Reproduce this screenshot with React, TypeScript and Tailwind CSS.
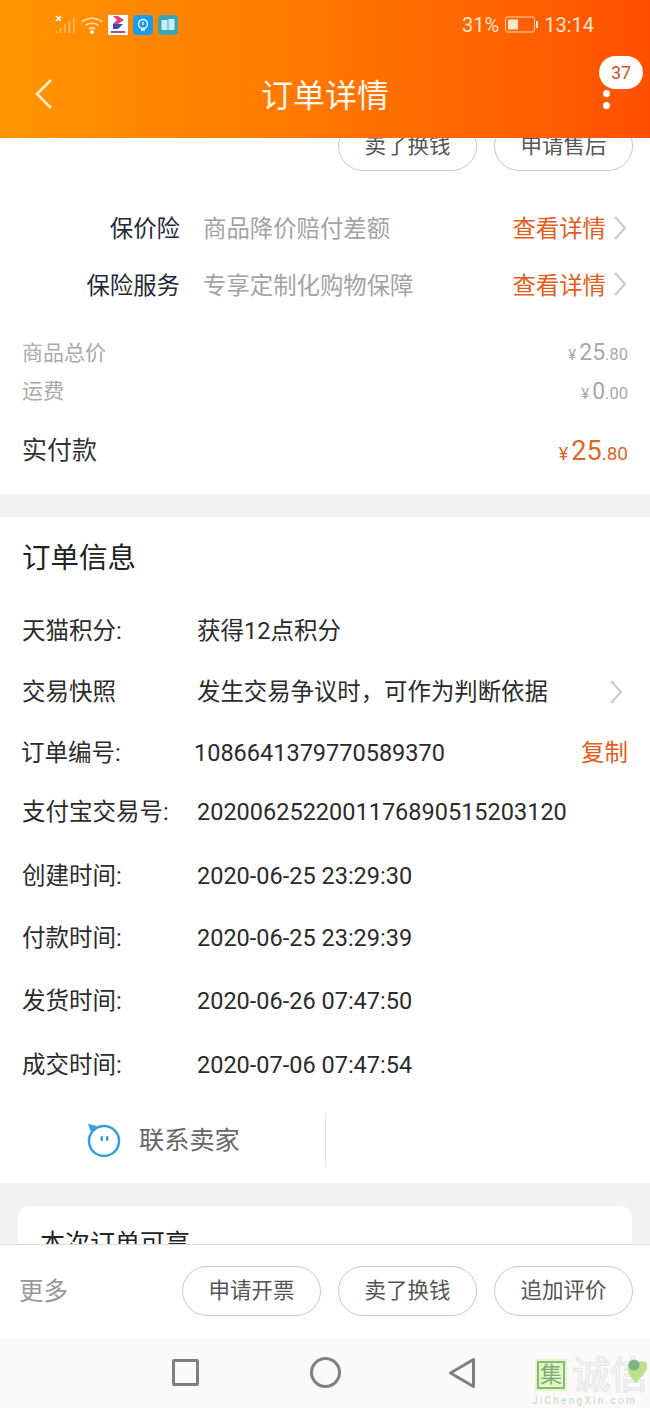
const Chevron = () => (
  <svg width="14" height="26" viewBox="0 0 14 26" fill="none" className="shrink-0">
    <path d="M2 2l10 11L2 24" stroke="#c9c9c9" strokeWidth="2" />
  </svg>
);

const PillButton = ({ label }: { label: string }) => (
  <div className="w-[139px] h-[50px] pt-[1px] rounded-full border border-[#c8c8c8] bg-white flex items-center justify-center text-[21.500px] text-[#555]">
    {label}
  </div>
);

const Money = ({ big, small }: { big: string; small: string }) => (
  <span className="flex items-baseline text-[#a8a8a8]">
    <span className="text-[15px] mr-[3px]">¥</span>
    <span className="text-[23px]">{big}</span>
    <span className="text-[16.500px]">.{small}</span>
  </span>
);

const StatusIcons = () => (
  <div className="flex items-center">
    <svg width="20" height="20" viewBox="0 0 20 20" className="mr-[6px]">
      <path d="M1 1l5 5M6 1L1 6" stroke="#fff" strokeWidth="1.600" />
      <path d="M1.500 18v-2M5.500 18v-5M10 18V9M14.500 18V6M19 18V2" stroke="#ffb866" strokeWidth="1.600" />
    </svg>
    <svg width="22" height="18" viewBox="0 0 22 18" fill="none" className="mr-[5px]">
      <path d="M1 6c5.500-5 14.500-5 20 0M4.500 9.500c3.500-3 9.500-3 13 0M8 13c1.700-1.200 4.300-1.200 6 0" stroke="#ffdca8" strokeWidth="1.700" />
      <circle cx="11" cy="16" r="2" fill="#fff3dc" />
    </svg>
    <svg width="20" height="20" viewBox="0 0 20 20" className="mr-[5px]">
      <rect width="20" height="20" fill="#fff" />
      <path d="M5 1h5l6 4-6 4H5l4-4z" fill="#e8407c" />
      <path d="M5 9h5l5 0-5 5H5z" fill="#3a4cc0" />
      <rect x="3" y="16" width="14" height="2" fill="#b04aa0" />
    </svg>
    <svg width="20" height="20" viewBox="0 0 20 20" className="mr-[5px]">
      <rect width="20" height="20" rx="4" fill="#1a9cf0" />
      <circle cx="10" cy="9" r="4.500" fill="none" stroke="#fff" strokeWidth="1.300" />
      <path d="M8 15h4M10 7v3" stroke="#fff" strokeWidth="1.300" />
    </svg>
    <svg width="20" height="20" viewBox="0 0 20 20">
      <rect width="20" height="20" rx="4" fill="#3aa7b8" />
      <path d="M3.500 5h6v10h-6zM10.500 4h6v11h-6z" fill="#c8eef4" />
    </svg>
  </div>
);

const BatteryIcon = () => (
  <svg width="33" height="18" viewBox="0 0 33 18" fill="none">
    <rect x="0.500" y="1" width="29" height="15" rx="2" stroke="#ffd9b0" />
    <rect x="3" y="3.500" width="10" height="10" fill="#ffe6cc" />
    <rect x="31" y="5" width="2" height="7" fill="#ffe6cc" />
  </svg>
);

const SellerIcon = () => (
  <svg width="34" height="34" viewBox="0 0 34 34" fill="none">
    <circle cx="17" cy="18" r="15" stroke="#2fa3dc" strokeWidth="2.500" />
    <path d="M1 1l9 2-6 6z" fill="#2fa3dc" />
    <rect x="13.500" y="13" width="2.500" height="5" rx="1.200" fill="#2fa3dc" />
    <rect x="19" y="13" width="2.500" height="5" rx="1.200" fill="#2fa3dc" />
  </svg>
);

const App = () => {
  return (
    <div className="w-[650px] h-[1408px] overflow-hidden flex flex-col bg-[#f2f2f2] font-['Roboto','Noto_Sans_CJK_SC',sans-serif]">
      {/* header */}
      <header className="h-[138px] shrink-0 relative z-10 bg-gradient-to-r from-[#ff9500] to-[#ff5000] text-white">
        <div className="h-[50px] flex items-center pl-[55px] pr-[56px]">
          <StatusIcons />
          <div className="ml-auto flex items-center gap-[6px] text-[20px] text-[#ffe6cc]">
            <span>31%</span>
            <BatteryIcon />
            <span>13:14</span>
          </div>
        </div>
        <div className="h-[88px] pt-[4px] relative flex items-center justify-center">
          <h1 className="text-[32px] leading-none font-normal text-[#fff8ee]">订单详情</h1>
          <svg width="18" height="30" viewBox="0 0 18 30" fill="none" className="absolute left-[35px] top-[29px]">
            <path d="M16 1L2 15l14 14" stroke="#ffedd0" strokeWidth="2.500" />
          </svg>
          <div className="absolute left-[599px] top-[6px] w-[44px] h-[33px] rounded-full bg-white flex items-center justify-center text-[18px] text-[#c8562a]">
            37
          </div>
          <div className="absolute left-[603px] top-[40px] flex flex-col gap-[5px]">
            <span className="w-[7px] h-[7px] rounded-full bg-white" />
            <span className="w-[7px] h-[7px] rounded-full bg-white" />
          </div>
        </div>
      </header>

      {/* scrolled content */}
      <main className="flex-1 min-h-0 overflow-hidden">
        <section className="bg-white -mt-[17px] pb-[19px]">
          <div className="flex justify-end gap-[17px] pr-[17px]">
            <PillButton label="卖了换钱" />
            <PillButton label="申请售后" />
          </div>

          <div className="mt-[29px] text-[23.400px]">
            <div className="h-[57px] pt-[2px] flex items-center">
              <span className="w-[180px] text-right text-[#1d2b38]">保价险</span>
              <span className="ml-[23px] text-[#a3a3a3]">商品降价赔付差额</span>
              <span className="ml-auto text-[#e25d1c]">查看详情</span>
              <span className="ml-[7px] mr-[23px] -mt-[3px]"><Chevron /></span>
            </div>
            <div className="h-[57px] pt-[2px] flex items-center">
              <span className="w-[180px] text-right text-[#1d2b38]">保险服务</span>
              <span className="ml-[23px] text-[#a3a3a3]">专享定制化购物保障</span>
              <span className="ml-auto text-[#e25d1c]">查看详情</span>
              <span className="ml-[7px] mr-[23px] -mt-[5px]"><Chevron /></span>
            </div>
          </div>

          <div className="mt-[19px] px-[22px]">
            <div className="h-[39px] pt-[2px] flex items-center justify-between text-[21px] text-[#aaa]">
              <span>商品总价</span>
              <Money big="25" small="80" />
            </div>
            <div className="h-[39px] pt-[1px] flex items-center justify-between text-[21px] text-[#aaa]">
              <span>运费</span>
              <Money big="0" small="00" />
            </div>
            <div className="mt-[14px] h-[50px] pt-[2px] flex items-center justify-between">
              <span className="text-[25px] text-[#333]">实付款</span>
              <span className="flex items-baseline text-[#e0662a]">
                <span className="text-[18px] mr-[3px]">¥</span>
                <span className="text-[27px]">25</span>
                <span className="text-[19px]">.80</span>
              </span>
            </div>
          </div>
        </section>

        <section className="mt-[23px] bg-white pt-[20px] pb-[17px] text-[23.500px] text-[#2b2b2b]">
          <h2 className="h-[40px] pt-[4px] px-[22px] mb-[22px] flex items-center text-[28.500px] font-normal text-[#222]">订单信息</h2>

          <div className="h-[62px] pt-[3px] flex items-center pl-[22px]">
            <span className="w-[175px]">天猫积分:</span>
            <span>获得12点积分</span>
          </div>
          <div className="h-[61px] pt-[3px] flex items-center pl-[22px]">
            <span className="w-[175px]">交易快照</span>
            <span className="text-[23.400px]">发生交易争议时，可作为判断依据</span>
            <span className="ml-auto mr-[27px] -mt-[3px]"><Chevron /></span>
          </div>
          <div className="h-[60px] pt-[3px] flex items-center pl-[21px]">
            <span className="w-[173px]">订单编号:</span>
            <span>1086641379770589370</span>
            <span className="ml-auto mr-[22px] text-[#e25d1c]">复制</span>
          </div>
          <div className="h-[61px] flex items-center pl-[22px]">
            <span className="w-[175px]">支付宝交易号:</span>
            <span>2020062522001176890515203120</span>
          </div>
          <div className="h-[64px] pt-[3px] flex items-center pl-[22px]">
            <span className="w-[175px]">创建时间:</span>
            <span>2020-06-25 23:29:30</span>
          </div>
          <div className="h-[63px] pt-[1px] flex items-center pl-[22px]">
            <span className="w-[175px]">付款时间:</span>
            <span>2020-06-25 23:29:39</span>
          </div>
          <div className="h-[63px] pt-[1px] flex items-center pl-[22px]">
            <span className="w-[175px]">发货时间:</span>
            <span>2020-06-26 07:47:50</span>
          </div>
          <div className="h-[63px] pt-[2px] flex items-center pl-[22px]">
            <span className="w-[175px]">成交时间:</span>
            <span>2020-07-06 07:47:54</span>
          </div>

          <div className="mt-[17px] h-[53px] flex">
            <div className="w-[326px] border-r border-[#e6e6e6] flex items-center pl-[87px] gap-[18px]">
              <SellerIcon />
              <span className="text-[25.200px] pt-[2px] text-[#666]">联系卖家</span>
            </div>
          </div>
        </section>

        <section className="pt-[23px] px-[18px]">
          <div className="h-[80px] bg-white rounded-t-[12px] px-[22px] pt-[19px] text-[25px] leading-[38px] text-[#222]">
            本次订单可享
          </div>
        </section>
      </main>

      {/* bottom actions */}
      <div className="h-[94px] shrink-0 bg-white border-t border-[#dcdcdc] flex items-center pl-[19px] pr-[17px] pb-[1px]">
        <span className="text-[24.500px] pt-[3px] text-[#999]">更多</span>
        <div className="ml-auto flex gap-[17px]">
          <PillButton label="申请开票" />
          <PillButton label="卖了换钱" />
          <PillButton label="追加评价" />
        </div>
      </div>

      {/* android nav bar */}
      <nav className="h-[70px] shrink-0 relative bg-[#fafafa] flex items-center">
        <div className="flex items-center pl-[172px] gap-[111px] pb-[1px]">
          <span className="w-[27px] h-[27px] rounded-[2px] border-[3px] border-[#808080]" />
          <span className="w-[31px] h-[31px] rounded-full border-[3px] border-[#808080]" />
          <svg width="28" height="32" viewBox="0 0 28 32" fill="none" className="-ml-[4px]">
            <path d="M25.500 2.500v27L2.500 16z" stroke="#808080" strokeWidth="3" strokeLinejoin="round" />
          </svg>
        </div>
        <div className="absolute left-[532px] top-[19px] w-[118px]">
          <div className="flex items-center pl-[3px]">
            <span className="w-[32px] h-[32px] bg-[#e4f5c0] flex items-center justify-center">
              <span className="w-[28px] h-[28px] border-2 border-[#86b884] flex items-center justify-center text-[22px] leading-none text-[#7aad78]">集</span>
            </span>
            <span className="ml-[5px] text-[38px] leading-[36px] text-transparent [-webkit-text-stroke:1px_#e4e4e4] whitespace-nowrap">诚信</span>
          </div>
          <div className="mt-[2px] text-[10px] leading-[12px] tracking-[2.300px] text-[#c4dcbc] whitespace-nowrap">JiChengXin.com</div>
          <svg width="22" height="26" viewBox="0 0 22 26" className="absolute left-[95px] top-[1px]">
            <path d="M9 25C2 18 0 12 1 7c1-4 6-5 8-1 2-3 9-4 11 0 2 5-4 11-11 19z" fill="#b4dc74" opacity="0.85" />
            <circle cx="7" cy="7" r="5.500" fill="#6cab8a" opacity="0.85" />
          </svg>
        </div>
      </nav>
    </div>
  );
};

export default App;
